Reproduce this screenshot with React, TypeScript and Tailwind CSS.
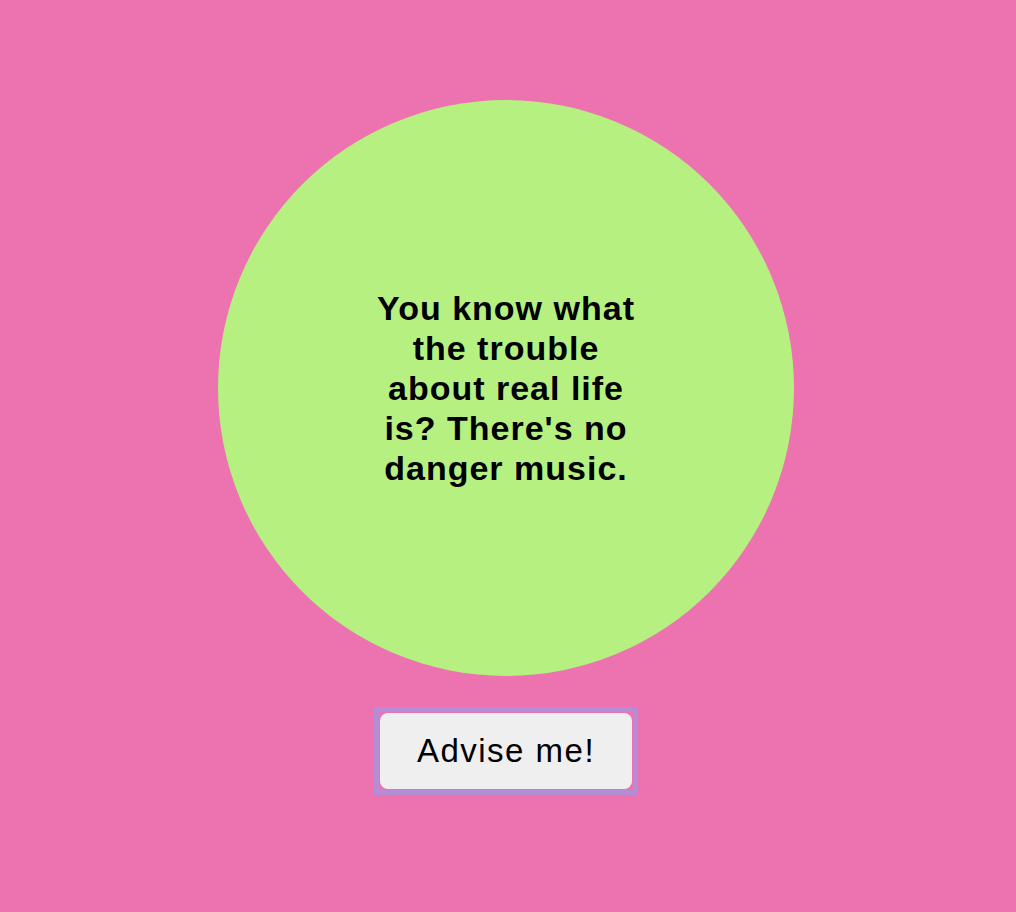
import React from "react";

const App: React.FC = () => {
  return (
    <div
      className="min-h-[912px] w-full bg-[#ed72b0] flex flex-col items-center pt-[100px] pr-[4px]"
      style={{ fontFamily: '"Liberation Sans", Arial, sans-serif' }}
    >
      <div className="w-[576px] h-[576px] rounded-full bg-[#b5f081] flex items-center justify-center">
        <p className="w-[264px] text-center font-bold text-[34px] leading-[40px] tracking-[1px] text-black">
          You know what the trouble about real life is? There's no danger music.
        </p>
      </div>
      <div className="mt-[31px] border-[5px] border-[#b68cd6] p-px">
        <button className="w-[252px] h-[76px] rounded-lg bg-[#efefef] text-[33px] tracking-[1.5px] text-black">
          Advise me!
        </button>
      </div>
    </div>
  );
};

export default App;
